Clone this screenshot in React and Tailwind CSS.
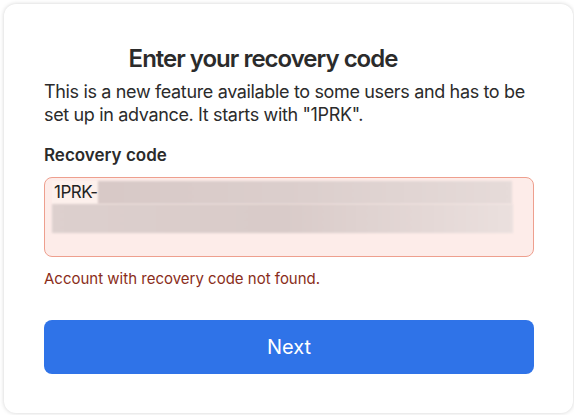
export default function App() {
  return (
    <div className="w-[574px] h-[415px] bg-white pl-[4px] pt-[4px] pr-[1px] pb-[2px]" style={{ fontFamily: "Inter, 'Noto Sans', sans-serif" }}>
      <div className="h-full w-full rounded-xl bg-white shadow-[0_0_4px_rgba(0,0,0,0.18)] pl-[40px] pr-[39px] pt-[40px]">
        <h1 className="pr-[52px] text-center text-[24px] leading-[30px] tracking-[-1px] font-semibold text-[#2b2b2b]">Enter your recovery code</h1>
        <p className="mt-[6px] text-[18px] leading-[23px] tracking-[-0.35px] text-[#2b2b2b]">
          This is a new feature available to some users and has to be set up in advance. It starts with "1PRK".
        </p>
        <label className="block mt-[18px] text-[17px] leading-[22px] font-semibold text-[#2b2b2b]">Recovery code</label>
        <div className="mt-[11px] h-[80px] rounded-[8px] border border-[#ee9f8e] bg-[#fdece9] pl-[7px] pr-[8px] pt-[3px] relative">
          <div className="flex h-[23px]">
            <span className="pl-[2px] text-[17px] leading-[23px] tracking-[-0.5px] text-[#222] bg-[#fdf0ec]">1PRK-</span>
            <div className="h-[23px] w-[414px] bg-gradient-to-r from-[#d8c9c7] via-[#dccfcd] to-[#e6dbd9] blur-[1px]"></div>
          </div>
          <div className="h-[29px] w-[461px] bg-gradient-to-r from-[#ddd0ce] via-[#d9cbc9] to-[#ebe0de] blur-[1px]"></div>
        </div>
        <p className="mt-[12px] text-[15px] leading-[20px] text-[#8a2d1a]">Account with recovery code not found.</p>
        <button className="mt-[31px] h-[54px] w-full rounded-[8px] bg-[#2f73e8] text-white text-[20px] font-normal">Next</button>
      </div>
    </div>
  );
}
